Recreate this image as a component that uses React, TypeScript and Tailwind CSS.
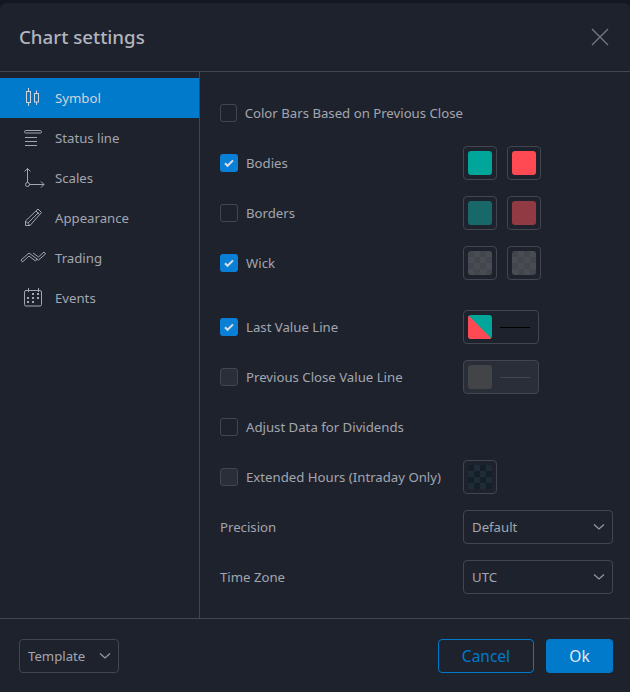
import type { ReactNode } from "react";

function Check({ on, disabled }: { on?: boolean; disabled?: boolean }) {
  if (on) {
    return (
      <span className="flex h-[18px] w-[18px] items-center justify-center rounded-[3px] bg-[#0a7fd6]">
        <svg width="12" height="10" viewBox="0 0 12 10" fill="none">
          <path d="M2 5.2 4.6 7.8 10 2.4" stroke="#d8dde6" strokeWidth="2" />
        </svg>
      </span>
    );
  }
  return (
    <span
      className={
        disabled
          ? "h-[18px] w-[18px] rounded-[3px] border border-[#434651] bg-[#2a2e39]"
          : "h-[18px] w-[18px] rounded-[3px] border border-[#434651]"
      }
    />
  );
}

function Swatch({ className }: { className: string }) {
  return (
    <span className="flex h-[34px] w-[34px] items-center justify-center rounded-[4px] border border-[#434651]">
      <span className={`h-6 w-6 rounded-[3px] ${className}`} />
    </span>
  );
}

function Chevron() {
  return (
    <svg width="12" height="8" viewBox="0 0 12 8" fill="none">
      <path d="M1 1.5 6 6 11 1.5" stroke="#9598a1" strokeWidth="1.3" />
    </svg>
  );
}

function Row({ label, on, disabled, children }: { label: string; on?: boolean; disabled?: boolean; children?: ReactNode }) {
  return (
    <div className="flex h-[34px] items-center">
      <div className="flex w-[243px] items-center gap-2">
        <Check on={on} disabled={disabled} />
        <span className="whitespace-nowrap pt-0.5">{label}</span>
      </div>
      {children}
    </div>
  );
}

function Select({ label, value }: { label: string; value: string }) {
  return (
    <div className="flex h-[34px] items-center">
      <span className="w-[243px] pt-0.5">{label}</span>
      <div className="flex h-[34px] w-[150px] items-center justify-between rounded-[4px] border border-[#434651] pl-2 pr-[7px]">
        <span className="pt-0.5">{value}</span>
        <Chevron />
      </div>
    </div>
  );
}

const navItems: { label: string; icon: ReactNode }[] = [
  {
    label: "Symbol",
    icon: (
      <>
        <path d="M9.500 4v3.500M9.500 18.500V22M17.500 6.500v3M17.500 18v3" />
        <rect x="7.500" y="7.500" width="4" height="11" />
        <rect x="15.500" y="9.500" width="4" height="8.500" />
      </>
    ),
  },
  {
    label: "Status line",
    icon: (
      <>
        <rect x="5.500" y="6.500" width="17" height="2.500" rx="1.250" />
        <path d="M6 13.500h12M6 17.500h12M6 21.500h12" />
      </>
    ),
  },
  {
    label: "Scales",
    icon: (
      <>
        <path d="M8.500 18.500V4.500M5.500 7.500l3-3 3 3M10.500 20.500H25M22 17.500l3 3-3 3" />
        <circle cx="8.500" cy="20.500" r="2" />
      </>
    ),
  },
  {
    label: "Appearance",
    icon: <path d="M6.500 21.500V17L19 5l3.500 3.500L11 21.500zM6.500 17l4.500 4.500M9 19 19.500 8.500M17 7l3.500 3.500" />,
  },
  {
    label: "Trading",
    icon: (
      <path d="M2 16 10 9l8 6-1.500 2L10 12l-6.500 6zM14 9l5.500 4L25 8l1.500 2-7 6-2-1.500" />
    ),
  },
  {
    label: "Events",
    icon: (
      <>
        <rect x="5.500" y="6.500" width="17" height="15.500" rx="1.500" />
        <path d="M9.500 4v4M19.500 4v4" />
        <path
          d="M13 9h2v2h-2zM18 9h2v2h-2zM8 13h2v2H8zM13 13h2v2h-2zM18 13h2v2h-2zM8 17h2v2H8zM13 17h2v2h-2z"
          fill="currentColor"
          stroke="none"
        />
      </>
    ),
  },
];

export default function App() {
  return (
    <div className="h-[692px] w-[630px] overflow-hidden bg-[#131722] pt-[3px] font-['Noto_Sans',sans-serif] text-[13.2px] text-[#a3a6af]">
      <div className="flex h-[689px] flex-col rounded-t-md bg-[#1e222d]">
        <header className="flex h-[69px] shrink-0 items-center justify-between border-b border-[#434651] pl-[19px] pr-[21px]">
          <h1 className="text-[18.7px] font-medium text-[#b2b5be]">Chart settings</h1>
          <svg width="18" height="18" viewBox="0 0 18 18" fill="none">
            <path d="M1 1 17 17M17 1 1 17" stroke="#787b86" strokeWidth="1.2" />
          </svg>
        </header>

        <div className="flex min-h-0 flex-1">
          <nav className="w-[200px] shrink-0 border-r border-[#434651] pt-1.5">
            {navItems.map((item, i) => (
              <div
                key={item.label}
                className={
                  i === 0
                    ? "flex h-10 items-center gap-2 bg-[#017acc] pl-[19px] text-[#d1d4dc]"
                    : "flex h-10 items-center gap-2 pl-[19px]"
                }
              >
                <svg width="28" height="28" viewBox="0 0 28 28" fill="none" stroke="currentColor" className="shrink-0">
                  {item.icon}
                </svg>
                <span className="pt-0.5">{item.label}</span>
              </div>
            ))}
          </nav>

          <main className="flex flex-1 flex-col gap-4 pl-5 pt-6">
            <Row label="Color Bars Based on Previous Close" />
            <Row label="Bodies" on>
              <div className="flex gap-2.5">
                <Swatch className="bg-[#00a69a]" />
                <Swatch className="bg-[#ff4a53]" />
              </div>
            </Row>
            <Row label="Borders">
              <div className="flex gap-2.5">
                <Swatch className="bg-[#186869]" />
                <Swatch className="bg-[#913a44]" />
              </div>
            </Row>
            <Row label="Wick" on>
              <div className="flex gap-2.5">
                <Swatch className="bg-[repeating-conic-gradient(#494c52_0%_25%,#43464c_0%_50%)] bg-[length:12px_12px]" />
                <Swatch className="bg-[repeating-conic-gradient(#494c52_0%_25%,#43464c_0%_50%)] bg-[length:12px_12px]" />
              </div>
            </Row>
            <div className="mt-3.5">
              <Row label="Last Value Line" on>
                <span className="flex h-[34px] w-[76px] items-center gap-2 rounded-[4px] border border-[#434651] pl-1">
                  <svg width="24" height="24" viewBox="0 0 24 24" className="rounded-[3px]">
                    <rect width="24" height="24" fill="#00a69a" />
                    <path d="M0 0 24 24H0z" fill="#ff4a53" />
                  </svg>
                  <span className="h-px w-[30px] bg-black" />
                </span>
              </Row>
            </div>
            <Row label="Previous Close Value Line" disabled>
              <span className="flex h-[34px] w-[76px] items-center gap-2 rounded-[4px] border border-[#434651] bg-[#2a2e39] pl-1">
                <span className="h-6 w-6 rounded-[3px] bg-[#434447]" />
                <span className="h-px w-[30px] bg-[#434651]" />
              </span>
            </Row>
            <Row label="Adjust Data for Dividends" />
            <Row label="Extended Hours (Intraday Only)" disabled>
              <Swatch className="bg-[repeating-conic-gradient(#1f2c37_0%_25%,#151f29_0%_50%)] bg-[length:12px_12px]" />
            </Row>
            <Select label="Precision" value="Default" />
            <Select label="Time Zone" value="UTC" />
          </main>
        </div>

        <footer className="flex h-[74px] shrink-0 items-center justify-between border-t border-[#434651] pl-[19px] pr-[17px]">
          <div className="flex h-[34px] w-[100px] items-center justify-between rounded-[4px] border border-[#434651] pl-2 pr-[7px]">
            <span className="pt-0.5">Template</span>
            <Chevron />
          </div>
          <div className="flex gap-3">
            <button className="h-[34px] w-[96px] rounded-[4px] border border-[#017acc] pt-0.5 text-[15.5px] text-[#017acc]">Cancel</button>
            <button className="h-[34px] w-[67px] rounded-[4px] bg-[#017acc] pt-0.5 text-[15.5px] text-[#e6e9ee]">Ok</button>
          </div>
        </footer>
      </div>
    </div>
  );
}
